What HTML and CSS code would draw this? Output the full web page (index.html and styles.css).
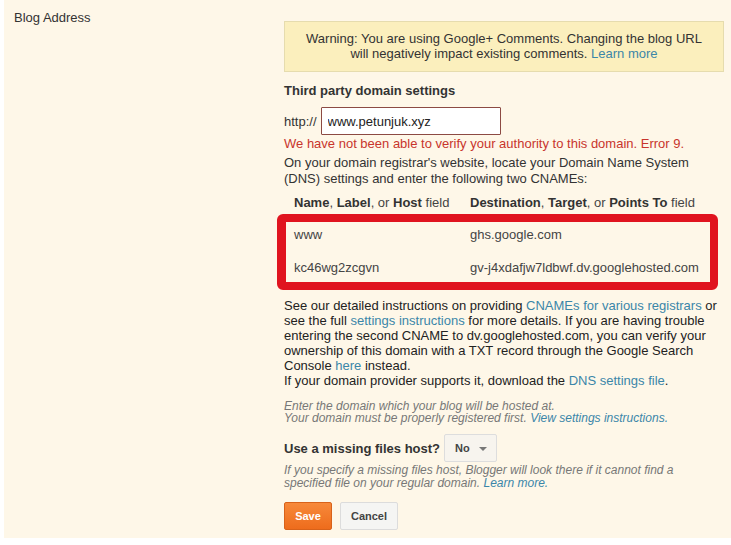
FILE: index.html
```html
<!DOCTYPE html>
<html lang="en">
<head>
  <meta charset="UTF-8">
  <title>Settings › Basic</title>
  <link rel="stylesheet" href="styles.css">
</head>
<body>
  <div class="panel">
    <div class="row-label">Blog Address</div>

    <div class="row-body">
      <div class="warning">
        Warning: You are using Google+ Comments. Changing the blog URL<br>
        will negatively impact existing comments. <a href="#">Learn more</a>
      </div>

      <h3 class="section-title">Third party domain settings</h3>

      <div class="domain-line">
        <span>http://</span>
        <input type="text" class="domain-input" value="www.petunjuk.xyz">
      </div>
      <div class="error">We have not been able to verify your authority to this domain. Error 9.</div>

      <p class="intro">On your domain registrar's website, locate your Domain Name System (DNS) settings and enter the following two CNAMEs:</p>

      <div class="cname-head">
        <div><b>Name</b>, <b>Label</b>, or <b>Host</b> field</div>
        <div><b>Destination</b>, <b>Target</b>, or <b>Points To</b> field</div>
      </div>
      <div class="cname-box">
        <div class="cname-row">
          <div>www</div>
          <div>ghs.google.com</div>
        </div>
        <div class="cname-row">
          <div>kc46wg2zcgvn</div>
          <div>gv-j4xdafjw7ldbwf.dv.googlehosted.com</div>
        </div>
      </div>

      <p class="details">
        See our detailed instructions on providing <a href="#">CNAMEs for various registrars</a> or
        see the full <a href="#">settings instructions</a> for more details. If you are having trouble
        entering the second CNAME to dv.googlehosted.com, you can verify your
        ownership of this domain with a TXT record through the Google Search
        Console <a href="#">here</a> instead.<br>
        If your domain provider supports it, download the <a href="#">DNS settings file</a>.
      </p>

      <p class="hint">
        Enter the domain which your blog will be hosted at.<br>
        Your domain must be properly registered first. <a href="#">View settings instructions.</a>
      </p>

      <div class="missing-line">
        <span class="missing-label">Use a missing files host?</span>
        <button class="dropdown">No <span class="caret"></span></button>
      </div>
      <p class="hint hint-missing">
        If you specify a missing files host, Blogger will look there if it cannot find a
        specified file on your regular domain. <a href="#">Learn more.</a>
      </p>

      <div class="actions">
        <button class="btn btn-save">Save</button>
        <button class="btn btn-cancel">Cancel</button>
      </div>
    </div>
  </div>
</body>
</html>
```

FILE: styles.css
```css
* { margin: 0; padding: 0; box-sizing: border-box; }
body {
  background: #fff;
  color: #222;
  font-family: "Liberation Sans", Arial, sans-serif;
  font-size: 13px;
  line-height: 15px;
}
a { color: #3b86a8; text-decoration: none; }
/* links sit on one line each, keep their boxes to the line height */
.details a, .hint a, .warning a { display: inline-block; }

.panel {
  margin-left: 4px;
  height: 538px;
  background: #fef7e8;
  display: grid;
  grid-template-columns: 280px 440px;
  padding-top: 10px;
}
.row-label { padding-left: 10px; color: #333; }

.warning {
  margin-top: 11px;
  padding: 9px 10px 10px;
  background: #fbefbd;
  border: 1px solid #e6dcae;
  text-align: center;
  color: #333;
}
.section-title {
  margin-top: 11px;
  font-size: 13px;
  font-weight: bold;
  color: #333;
}

.domain-line {
  margin-top: 9px;
  display: flex;
  align-items: center;
  gap: 4px;
  color: #333;
}
.domain-input {
  width: 180px;
  height: 28px;
  padding: 0 6px;
  border: 1px solid #8c4a43;
  border-radius: 1px;
  background: #fff;
  font: 13px "Liberation Sans", Arial, sans-serif;
  color: #222;
}
.error { margin-top: 1px; color: #c8352c; }
.intro { margin-top: 4px; line-height: 16px; color: #333; }

.cname-head, .cname-row {
  display: grid;
  grid-template-columns: 176px 1fr;
}
.cname-head { margin-top: 8px; padding-left: 10px; color: #444; }
.cname-head b { color: #333; }
.cname-box {
  margin: 4px 6px 0 -7px;
  border: 8px solid #e0141f;
  border-left-width: 9px;
  border-radius: 6px;
  padding: 5px 0 6px 8px;
  display: flex;
  flex-direction: column;
  gap: 17px;
  color: #444;
}
.cname-row { line-height: 16px; }

.details { margin-top: 8px; color: #222; }

.hint {
  margin-top: 12px;
  font-size: 12px;
  line-height: 12px;
  font-style: italic;
  color: #777;
}

.missing-line {
  margin-top: 10px;
  display: flex;
  align-items: center;
  gap: 4px;
}
.missing-label { font-size: 13px; font-weight: bold; color: #333; }
.dropdown {
  height: 28px;
  width: 53px;
  padding-left: 10px;
  text-align: left;
  background: #f7f4ee;
  border: 1px solid #ddd;
  border-radius: 2px;
  font: bold 11px "Liberation Sans", Arial, sans-serif;
  color: #444;
}
.caret {
  display: inline-block;
  margin-left: 6px;
  vertical-align: middle;
  border-left: 4px solid transparent;
  border-right: 4px solid transparent;
  border-top: 4px solid #777;
}
.hint-missing { margin-top: 2px; line-height: 13px; }

.actions {
  margin-top: 12px;
  display: flex;
  gap: 8px;
}
.btn {
  height: 28px;
  border-radius: 2px;
  font: bold 11px "Liberation Sans", Arial, sans-serif;
}
.btn-save {
  width: 48px;
  background: linear-gradient(#f7893a, #ee6c1c);
  border: 1px solid #d8621a;
  color: #fff;
}
.btn-cancel {
  width: 58px;
  background: #f5f5f3;
  border: 1px solid #dcdcdc;
  color: #444;
}
```
